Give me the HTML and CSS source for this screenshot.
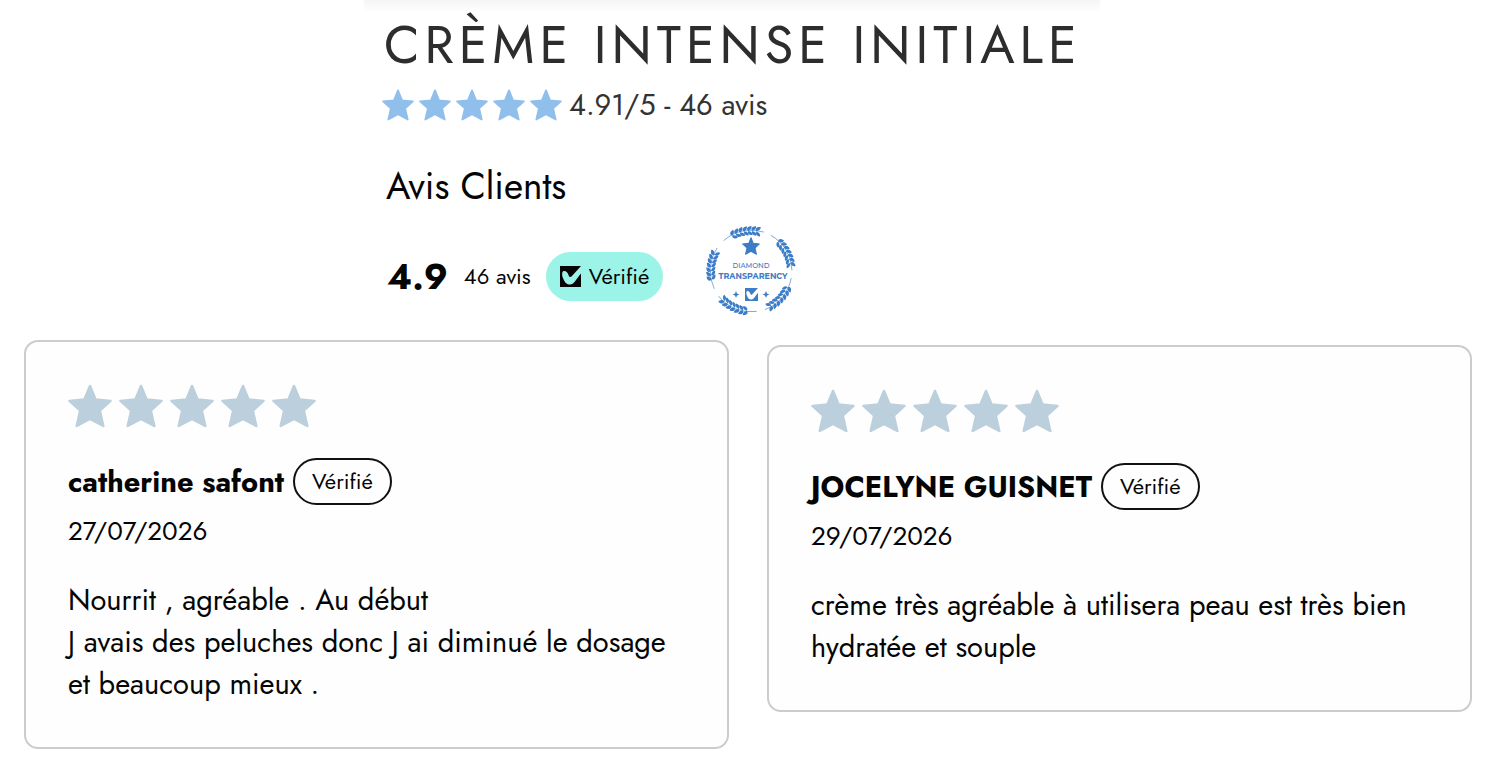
FILE: index.html
```html
<!DOCTYPE html>
<html lang="fr">
<head>
<meta charset="utf-8">
<meta name="viewport" content="width=device-width, initial-scale=1">
<title>Crème Intense Initiale – Avis</title>
<link rel="stylesheet" href="styles.css">
</head>
<body>
<svg class="defs" aria-hidden="true">
  <symbol id="star" viewBox="0 0 44 44"><path d="M22 2 L27.6 15.6 L42.5 16.9 L31.8 26.6 L35.3 42 L22 34.800 L8.700 42 L12.200 26.6 L1.5 16.9 L16.4 15.6Z" fill="currentColor" stroke="currentColor" stroke-width="2.500" stroke-linejoin="round"/></symbol>
  <symbol id="check" viewBox="0 0 21 21"><path fill="currentColor" fill-rule="evenodd" d="M0 0H21L11.500 10.500C10 11.500 9 11 8.500 9C7.500 6 5.500 4.500 3.500 5C1.500 6 2 10 3.200 12.500C5 17 7 18.500 10 18.500C14 18.500 15.500 14 21 7.500V21H0Z"/></symbol>
</svg>
<main class="page">
  <header class="product">
    <h1 class="product-title">CRÈME INTENSE INITIALE</h1>
    <div class="product-rating">
      <span class="stars stars-small" role="img" aria-label="4.91 sur 5"><svg><use href="#star"/></svg><svg><use href="#star"/></svg><svg><use href="#star"/></svg><svg><use href="#star"/></svg><svg><use href="#star"/></svg></span>
      <span>4.91/5 - 46 avis</span>
    </div>
    <h2 class="section-title">Avis Clients</h2>
    <div class="summary">
      <strong class="score">4.9</strong>
      <span class="count">46 avis</span>
      <span class="verified"><svg class="check"><use href="#check"/></svg>Vérifié</span>
      <svg class="seal" viewBox="-46 -46 92 92" role="img" aria-label="Diamond Transparency">
        <defs>
          <path id="leaf" d="M0 0C-2 -2 -1 -4.500 3.500 -4.800C4 -3 3 -1 0 0ZM0 0C-1 2 0 4.200 4 4.500C4.500 2.500 3 .5 0 0Z" fill="currentColor"/>
          <g id="branch">
            <path d="M-21 -35A41 41 0 0 1 20 -35.800" fill="none" stroke="currentColor" stroke-width=".6"/>
            <use href="#leaf" transform="rotate(-17) translate(0 -40)"/>
            <use href="#leaf" transform="rotate(-11) translate(0 -40)"/>
            <use href="#leaf" transform="rotate(-5) translate(0 -40)"/>
            <use href="#leaf" transform="rotate(1) translate(0 -40)"/>
            <use href="#leaf" transform="rotate(7) translate(0 -40)"/>
            <use href="#leaf" transform="rotate(13) translate(0 -40)"/>
            <use href="#leaf" transform="rotate(19) translate(0 -40)"/>
          </g>
        </defs>
        <use href="#branch" transform="rotate(-11)"/>
        <use href="#branch" transform="rotate(60)"/>
        <use href="#branch" transform="rotate(131)"/>
        <use href="#branch" transform="rotate(203)"/>
        <use href="#branch" transform="rotate(275)"/>
        <use href="#star" x="-9" y="-34" width="18" height="18"/>
        <text class="seal-top" x="0" y="-3" text-anchor="middle">DIAMOND</text>
        <text class="seal-main" x="2" y="8" text-anchor="middle">TRANSPARENCY</text>
        <use href="#check" x="-6" y="17" width="13" height="13"/>
        <path d="M-15 20l1 2.500 2.500 1-2.500 1-1 2.500-1-2.500-2.500-1 2.500-1zM15 20l1 2.500 2.500 1-2.500 1-1 2.500-1-2.500-2.500-1 2.500-1z" fill="currentColor"/>
      </svg>
    </div>
  </header>
  <section class="reviews" aria-label="Avis">
    <article class="card">
      <span class="stars" role="img" aria-label="5 sur 5"><svg><use href="#star"/></svg><svg><use href="#star"/></svg><svg><use href="#star"/></svg><svg><use href="#star"/></svg><svg><use href="#star"/></svg></span>
      <div class="author"><strong>catherine safont</strong><span class="badge">Vérifié</span></div>
      <time class="date" datetime="2026-07-27">27/07/2026</time>
      <p class="text">Nourrit , agréable . Au début<br>J avais des peluches donc J ai diminué le dosage et beaucoup mieux .</p>
    </article>
    <article class="card card-offset">
      <span class="stars" role="img" aria-label="5 sur 5"><svg><use href="#star"/></svg><svg><use href="#star"/></svg><svg><use href="#star"/></svg><svg><use href="#star"/></svg><svg><use href="#star"/></svg></span>
      <div class="author"><strong>JOCELYNE GUISNET</strong><span class="badge">Vérifié</span></div>
      <time class="date" datetime="2026-07-29">29/07/2026</time>
      <p class="text">crème très agréable à utilisera peau est très bien hydratée et souple</p>
    </article>
  </section>
</main>
</body>
</html>
```
FILE: styles.css
```css
* { box-sizing: border-box; }
body { margin: 0; background: #fff; color: #050505; font-family: Jost, Lato, sans-serif; }
h1, h2, p { margin: 0; font-weight: 400; }
.defs { position: absolute; width: 0; height: 0; }
.page { padding: 0 28px 20px 24px; }
.product { max-width: 736px; margin-left: 340px; padding-left: 20px; background: linear-gradient(#f5f5f5, #fff 12px); }
.product-title { padding-top: 13px; font-size: 52px; line-height: 64px; letter-spacing: 5px; color: #2d2d2d; white-space: nowrap; }
.product-rating { display: flex; align-items: center; gap: 7px; margin-top: 9px; font-size: 29px; line-height: 38px; color: #333; }
.stars { display: flex; gap: 7px; color: #bccfdc; }
.stars svg { width: 44px; height: 44px; }
.stars-small { gap: 5px; color: #91bfeb; margin-left: -2px; }
.stars-small svg { width: 32px; height: 32px; }
.section-title { margin: 38px 0 0 2px; font-size: 37px; line-height: 48px; }
.summary { display: flex; align-items: center; margin: 15px 0 13px 3px; }
.score { font-size: 36px; line-height: 48px; font-weight: 700; }
.count { margin-left: 16px; font-size: 22px; }
.verified { display: flex; align-items: center; gap: 8px; height: 49px; margin-left: 15px; padding: 0 14px; border-radius: 25px; background: #9cf3e7; font-size: 22px; }
.check { width: 21px; height: 21px; }
.seal { width: 92px; height: 92px; margin: 0 0 10px 42px; color: #3d7cc6; }
.seal text { font-family: Montserrat, Inter, sans-serif; fill: currentColor; }
.seal-top { font-size: 7px; font-weight: 500; }
.seal-main { font-size: 8px; font-weight: 700; }
.reviews { display: grid; grid-template-columns: 1fr 1fr; gap: 38px; align-items: start; }
.card { padding: 42px; border: 2px solid #ccc; border-radius: 14px; background: #fefefe; }
.card-offset { margin-top: 5px; }
.author { display: flex; align-items: center; gap: 9px; margin-top: 30px; font-size: 29px; }
.badge { height: 47px; padding: 0 17px; border: 2px solid #111; border-radius: 24px; font-size: 22px; line-height: 42px; }
.date { display: block; margin-top: 8px; font-size: 26px; line-height: 36px; }
.text { margin-top: 30px; font-size: 29px; line-height: 42px; }
```
